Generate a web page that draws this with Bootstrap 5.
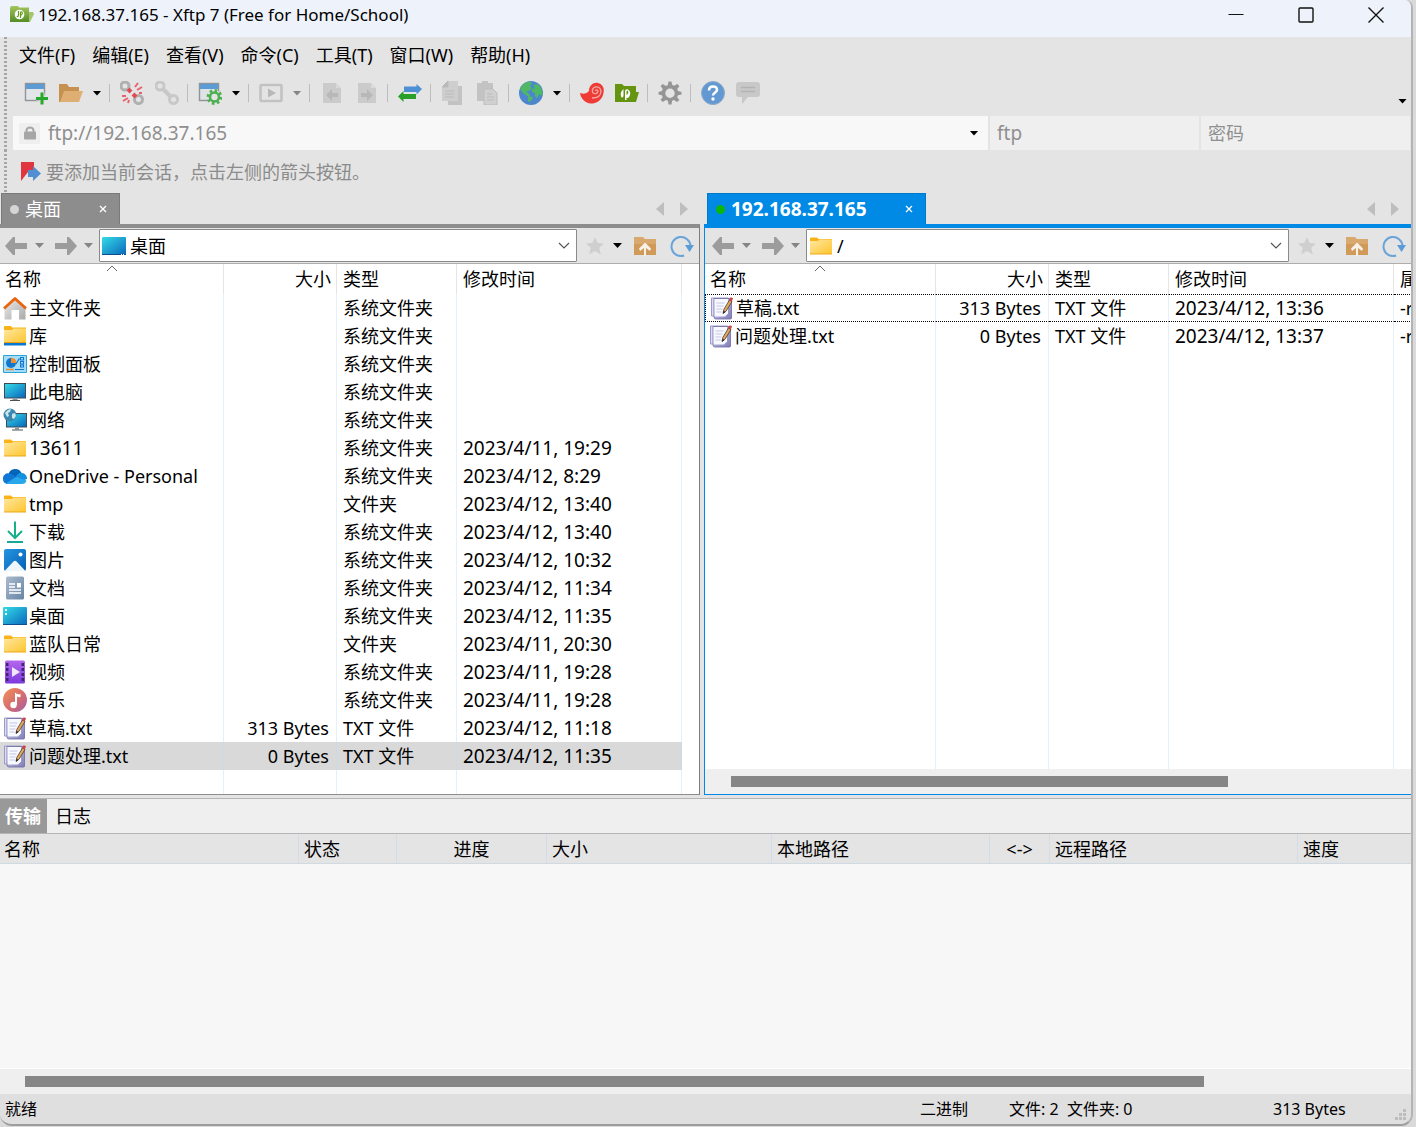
<!DOCTYPE html>
<html lang="zh-CN">
<head>
<meta charset="utf-8">
<meta name="viewport" content="width=device-width, initial-scale=1">
<title>192.168.37.165 - Xftp 7</title>
<link href="https://cdn.jsdelivr.net/npm/bootstrap@5.3.0/dist/css/bootstrap.min.css" rel="stylesheet">
<style>
body{font-family:"Noto Sans","Noto Sans CJK SC",sans-serif;font-size:18px;line-height:24px;color:#000;background:#dadada;min-height:100vh}
.win{min-height:calc(100vh - 1px);margin-right:3px;border-right:2px solid #b3b3b3;border-bottom:2px solid #9d9d9d;border-radius:0 8px 12px 12px;background:#e4e4e4;overflow:hidden}
svg{display:block;flex:none}
button,.flatlink{border:0;background:none;padding:0;color:inherit;text-decoration:none}
input{border:0;background:none;padding:0;min-width:0;outline:0;color:inherit}
.titlebar{height:37px;background:#eef3fb;padding:0 0 7px 10px}
.titletext{font-size:17px;line-height:24px}
.winbtn{width:70px;height:30px}
.grip{width:3px;margin-left:4px;background:repeating-linear-gradient(#a6a6a6 0 2px,transparent 2px 4px)}
.menurow{height:36px;padding-left:12px}
.menurow a{margin-right:17px}
.toolrow{height:40px;padding-left:11px}
.tbtn{width:35px;height:30px}
.cbtn{width:18px;height:30px}
.vsep{width:1px;height:18px;background:#bdbdbd;margin:0 4px 0 3px}
.caret{width:9px;height:5px;background:#000;clip-path:polygon(0 0,100% 0,50% 100%)}
.caret.dim{background:#858585}
.addr{height:34px;margin:3px 1px 0 6px;color:#8f8f8f;gap:2px;font-size:19px}
.urlbox{background:#f8f8f8;padding-left:6px}
.dropbtn{width:28px;height:30px}
.lockbox{width:21px;height:21px;background:#efefef}
.cred{background:#efefef;padding-left:7px;width:209px}
.cred::placeholder{color:#8f8f8f;opacity:1;font-size:18px}
.favrow{height:43px;padding-left:13px;color:#8b8b8b}
.panes{gap:4px}
.pane-l{flex:700 1 0}
.pane-r{flex:707 1 0}
.pane-l,.pane-r{min-width:0}
.tabrow{height:31px;padding-right:12px}
.ptab{height:31px;color:#fff;border:1px solid #7a7a7a;border-bottom:0;background:#8d8d8d;padding:0 12px 0 8px;margin-left:1px;width:119px}
.pane-r .ptab{background:#008ae5;border-color:#0079c9;width:219px;font-size:19px;font-weight:700;margin-left:3px}
.dot{width:9px;height:9px;border-radius:50%;background:#d5d5d5;margin-right:6px}
.pane-r .dot{background:#0db60d}
.pbody{border-top:4px solid #8d8d8d;border-right:1px solid #7d7d7d;border-bottom:1px solid #8d8d8d;min-height:571px}
.pane-r .pbody{border:1px solid #008ae5;border-top-width:4px;border-right:0}
.ptools{height:36px;border-bottom:1px solid #adadad;padding-left:4px}
.pane-r .ptools{padding-left:6px}
.hbtn{width:18px;height:30px;margin-left:3px}
.upbtn{margin-left:6px}
.refbtn{margin:0 5px 0 13px}
.combo{height:33px;border:1px solid #8a8a8a;background:#fff;padding:0 6px 0 2px;border-radius:1px;margin-left:1px}
.flist{background:#fff;overflow:hidden}
.ftable{table-layout:fixed;width:682px;border-collapse:separate;border-spacing:0}
.pane-r .ftable{width:789px}
.ftable th,.ftable td{padding:0 7px 0 6px;white-space:nowrap;overflow:hidden;height:28px;border-right:1px solid #e6f0fb;font-weight:400}
.ftable th{height:30px;border-right-color:#e5e5e5;text-align:left;position:relative}
.ftable th:first-child{padding-left:5px}
.ftable td:first-child{padding:0 0 0 3px}
.ftable td > div{gap:2px}
.ftable .r{text-align:right}
.ftable th.r{padding-right:5px}
.ftable .when{font-size:19px}
.ftable tr.filler td{height:24px}
.pane-r tr.filler td{height:auto}
.ftable tr.picked td{background:#d9d9d9;border-color:#ccd9e8}
.ftable tr.focused td{border-top:1px dotted #000;border-bottom:1px dotted #000}
.ftable tr.focused td:first-child{border-left:1px dotted #000}
.pane-r .ftable td:first-child{padding-left:4px}
.c1{width:224px}.c2{width:113px}.c3{width:120px}.c4{width:225px}.c5{width:100px}
.pane-r .c1{width:231px}
.sorted{position:absolute;left:50%;margin-left:-6px;top:1px}
.hscroll{height:25px;background:#efefef}
.thumb{height:11px;background:#868686}
.xtabs{height:36px;margin-top:3px;border-top:1px solid #b5b5b5;border-bottom:1px solid #b5b5b5;background:#efefef}
.xtabs button{padding:0 8px}
.xtabs .on{background:#999;color:#fff;font-weight:700;padding:0 6px 0 5px}
.xtable{table-layout:fixed;width:100%;border-collapse:separate;border-spacing:0}
.xtable th{height:30px;font-weight:400;padding:0 5px;border-right:1px solid #d3dde8;border-bottom:1px solid #d0dae3;overflow:hidden;white-space:nowrap}
.xtable th:first-child{padding-left:4px}
.xtable th:last-child{border-right:0}
.xbody{background:#f7f7f7;border-bottom:1px solid #fff;min-height:100px}
.status{height:30px;background:#dfdfdf;font-size:16px;padding-left:5px}
.s2{width:89px}.s3{width:264px}.s4{width:138px}
</style>
<script src="https://cdn.jsdelivr.net/npm/bootstrap@5.3.0/dist/js/bootstrap.bundle.min.js"></script>
</head>
<body>
<svg width="0" height="0" class="position-absolute" aria-hidden="true">
<defs>
<linearGradient id="gf" x1="0" y1="0" x2="1" y2="1"><stop offset="0" stop-color="#ffe8a2"/><stop offset="1" stop-color="#fec52d"/></linearGradient>
<linearGradient id="gb" x1="0" y1="0" x2="1" y2="1"><stop offset="0" stop-color="#35dbe6"/><stop offset="1" stop-color="#0867bd"/></linearGradient>
<linearGradient id="gh" x1="0" y1="0" x2="1" y2="1"><stop offset="0" stop-color="#ececec"/><stop offset="1" stop-color="#a9a9a9"/></linearGradient>
<linearGradient id="gm" x1="0" y1="0" x2="1" y2="1"><stop offset="0" stop-color="#f59053"/><stop offset=".6" stop-color="#d06b74"/><stop offset="1" stop-color="#a45cae"/></linearGradient>
<linearGradient id="gv" x1="0" y1="0" x2="0" y2="1"><stop offset="0" stop-color="#b466ee"/><stop offset="1" stop-color="#7e3ade"/></linearGradient>
<linearGradient id="gd" x1="0" y1="0" x2="1" y2="1"><stop offset="0" stop-color="#abbccd"/><stop offset="1" stop-color="#6584a5"/></linearGradient>
<linearGradient id="gp" x1="0" y1="0" x2="1" y2="1"><stop offset="0" stop-color="#2595e0"/><stop offset="1" stop-color="#0560b4"/></linearGradient>
<linearGradient id="gt" x1="0" y1="0" x2="1" y2="1"><stop offset="0" stop-color="#d9d8f2"/><stop offset="1" stop-color="#7f7cb6"/></linearGradient>
<linearGradient id="gx" x1="0" y1="0" x2="0" y2="1"><stop offset="0" stop-color="#a3c65c"/><stop offset="1" stop-color="#558c26"/></linearGradient>
</defs>
<symbol id="i-folder" viewBox="0 0 24 24"><path d="M1 4.500q0-1 1-1h6l1.500 1.500H23v5H1z" fill="#f9b318"/><path d="M1 7h8l1.500-1.500H23v14.500H1z" fill="url(#gf)"/><path d="M1 19.500h22v1H1z" fill="#eda916"/></symbol>
<symbol id="i-lib" viewBox="0 0 24 24"><path d="M1 3q0-1 1-1h6l1 1.500h14v7H1z" fill="#f9b318"/><path d="M1 6h8l1.500-1.500H23v14H1z" fill="url(#gf)"/><path d="M1 18h22v1H1z" fill="#e9a212"/><path d="M1 19h22v2.500H1z" fill="#0878d2"/></symbol>
<symbol id="i-home" viewBox="0 0 24 24"><path d="M1.500 11 12 2l10.500 9v12.500H16V14H8.500v9.500h-7z" fill="url(#gh)"/><path d="M1 12.500 12 2.500l11 10" fill="none" stroke="#e8640e" stroke-width="2.800" stroke-linejoin="round"/></symbol>
<symbol id="i-ctrl" viewBox="0 0 24 24"><path d="M0.500 3.500h23v17H.5z" fill="#a3ddf8" stroke="#2da3d8"/><circle cx="8" cy="11" r="5" fill="#1277cf"/><path d="M8 11V5.500A5.500 5.500 0 0 1 13.500 11z" fill="#f1902a"/><path d="M3 17.500h8" stroke="#ee8d22" stroke-width="1.500"/><path d="M12 17.500h9M13 12l3-5h2" stroke="#1277cf" fill="none" stroke-width="1.200"/><rect x="17.500" y="5.500" width="3" height="2.500" fill="none" stroke="#1277cf"/><rect x="17.500" y="9.500" width="3" height="2.500" fill="none" stroke="#1277cf"/><rect x="17.500" y="13" width="3" height="2" fill="none" stroke="#1277cf"/></symbol>
<symbol id="i-pc" viewBox="0 0 24 24"><path d="M1 3h22v15.500H1z" fill="#3f4a52"/><path d="M2 4h20v13.500H2z" fill="url(#gb)"/><path d="M9.500 18.500h5v2h-5z" fill="#8b949a"/><path d="M7 20h10v1H7z" fill="#4b5257"/></symbol>
<symbol id="i-net" viewBox="0 0 24 24"><path d="M3 5h21v14.500H3z" fill="#3f4a52"/><path d="M4 6h19v12.500H4z" fill="url(#gb)"/><path d="M12 19.500h4v2h-4z" fill="#8b949a"/><path d="M9 21.500h11v1H9z" fill="#4b5257"/><circle cx="7" cy="7" r="6.500" fill="#3c87ae"/><path d="M2 5q3-4 6-4l-1 3-2 1 1 3-2 1zM9 6l3-1 1 3-2 3-2-1z" fill="#c7e6ee"/></symbol>
<symbol id="i-od" viewBox="0 0 24 24"><path d="M5.500 10a7 7 0 0 1 13-1l-5 5-7-2z" fill="#0364b8"/><path d="M0 15a5 5 0 0 1 6-5.500q3 0 5 2l6 4-13 4.500A5 5 0 0 1 0 15z" fill="#0f78d4"/><path d="M13 12.500q2.500-4.500 6-3.500a5.500 5.500 0 0 1 5 6l-5 2z" fill="#1490df"/><path d="M3 19.500 13 13l10.500 3.500q-1 3.500-4.500 3.500H5q-1 0-2-.5z" fill="#28a8ea"/></symbol>
<symbol id="i-down" viewBox="0 0 24 24"><path d="M12 1.500v15.500M5 11l7 7 7-7" fill="none" stroke="#17b08b" stroke-width="2"/><path d="M4 22h16" stroke="#17a89a" stroke-width="2"/></symbol>
<symbol id="i-pic" viewBox="0 0 24 24"><rect x="1" y="1" width="22" height="22" rx="2" fill="url(#gp)"/><path d="M2 22.500 10.500 13.500q1.500-1.500 3 0L22 22.500q-.5.500-1 .5H3q-.5 0-1-.5z" fill="#eef6fd"/><circle cx="17.500" cy="6.500" r="2" fill="#fff"/></symbol>
<symbol id="i-doc" viewBox="0 0 24 24"><rect x="3" y="0.500" width="18" height="23" rx="1.500" fill="url(#gd)"/><path d="M6 8h6M6 11h6M6 14h12M6 17h12" stroke="#fff" stroke-width="1.300"/><path d="M14 7h4v4.500h-4z" fill="#fff"/></symbol>
<symbol id="i-desk" viewBox="0 0 24 24"><rect y="3" width="24" height="18" rx="1" fill="url(#gb)"/><path d="M2 5h2v2H2zM2 9h2v2H2z" fill="#e4fbff"/><path d="M0 20h24v1H0z" fill="#0b4f91"/></symbol>
<symbol id="i-deskplain" viewBox="0 0 24 24"><rect y="3" width="24" height="18" rx="1" fill="url(#gb)"/><path d="M0 20h24v1H0z" fill="#0b4f91"/><path d="M19 20h1v1h-1zM21 20h1v1h-1z" fill="#fff"/></symbol>
<symbol id="i-vid" viewBox="0 0 24 24"><rect x="2" y="0.500" width="20" height="23" rx="1.500" fill="url(#gv)"/><path d="M3 3h2.500v3H3zM3 8h2.500v3H3zM3 13h2.500v3H3zM3 18h2.500v3H3zM18.500 3H21v3h-2.500zM18.500 8H21v3h-2.500zM18.500 13H21v3h-2.500zM18.500 18H21v3h-2.500z" fill="#3f2471"/><path d="M9 7l8 5-8 5z" fill="#efe7fb"/></symbol>
<symbol id="i-mus" viewBox="0 0 24 24"><circle cx="12" cy="12" r="12" fill="url(#gm)"/><path d="M12 4.500q2 2.500 5.500 1.500v3q-2 .5-3.500-.5V17h-2z" fill="#fff"/><circle cx="10.500" cy="17" r="3.200" fill="#fff"/></symbol>
<symbol id="i-txt" viewBox="0 0 24 24"><path d="M1.500 2h17v18h-17z" fill="#dedcf3" stroke="#9c9aca"/><path d="M4 2.500h17.500V22q0 1-1 1H6q-2 0-2-2z" fill="url(#gt)" stroke="#6d6aa4" stroke-width=".8"/><path d="M4.500 3H18v14.500L15 20.500H4.500z" fill="#f8f8ff"/><path d="M6.500 7h8M6.500 10h7M6.500 13h6M6.500 16h5" stroke="#c3c8e4"/><path d="m13 17.500.8-4 5.700-9.500 2.500 1.500-5.800 9.500z" fill="#e0a95d" stroke="#4d3a31" stroke-width=".8"/><path d="m13 17.800.6-3 1.900 1.200z" fill="#222"/><path d="m19 4 1.300-2.500q2-.5 2.700 1L21.700 5.500z" fill="#c9444b"/></symbol>
<symbol id="i-back" viewBox="0 0 24 20"><path d="M1 10 9 1h2v6h12v6H11v6H9z" fill="#9c9c9c"/></symbol>
<symbol id="i-fwd" viewBox="0 0 24 20"><path d="M24 10 16 1h-2v6H2v6h12v6h2z" fill="#9c9c9c"/></symbol>
<symbol id="i-star" viewBox="0 0 20 20"><path d="m10 1 2.700 6 6.300.6-4.800 4.200 1.600 6.700L10 15l-5.800 3.500 1.600-6.700L1 7.600 7.300 7z" fill="#cfcfcf"/></symbol>
<symbol id="i-up" viewBox="0 0 24 24"><path d="M1 3h9l2 2h11v16H1z" fill="#d9a86c"/><path d="M1 10h22v11H1z" fill="#d09a58"/><path d="M11 22v-8l-4 3-1-2.500L12 8.500l6 6-1 2.500-4-3v8z" fill="#f7f1ea"/></symbol>
<symbol id="i-ref" viewBox="0 0 24 24"><path d="M14 21.500A9.500 9.500 0 1 1 20.500 12" fill="none" stroke="#68a3da" stroke-width="2"/><path d="M15 11h9l-4.500 7z" fill="#5b9bd8"/></symbol>
<symbol id="i-chev" viewBox="0 0 12 8"><path d="m1 1 5 5 5-5" fill="none" stroke="#555" stroke-width="1.200"/></symbol>
<symbol id="i-sort" viewBox="0 0 12 7"><path d="m1 6 5-5 5 5" fill="none" stroke="#666"/></symbol>
<symbol id="i-x" viewBox="0 0 8 8"><path d="m1 1 6 6M7 1 1 7" stroke="#fff" stroke-width="1.300"/></symbol>
<symbol id="i-l" viewBox="0 0 8 14"><path d="M8 0v14L0 7z" fill="#bebebe"/></symbol>
<symbol id="i-r" viewBox="0 0 8 14"><path d="M0 0v14l8-7z" fill="#bebebe"/></symbol>
<symbol id="i-gear" viewBox="0 0 24 24"><path fill-rule="evenodd" d="M10.500.500h3l.6 3.300 2 .9L19.400 3l2 2.300-2.200 2.800.8 2 3.500.8v2.600l-3.500.8-.8 2 2.200 2.800-2.300 2-3.100-2-1.900.7-.6 3.700h-3l-.6-3.700-2-.8-3.100 2-2.300-2.200 2.200-2.600-.8-2-3.400-.8V10.900l3.400-.9.8-2.100L2.600 5.100l2.200-2.200 3.100 2 2-.8zM12 7.500a4.700 4.700 0 1 0 0 9.400 4.700 4.700 0 0 0 0-9.400z"/></symbol>
<symbol id="i-xf" viewBox="0 0 24 24"><path d="M8.500 8v6.500q0 2.500-2 2Q4 12 8.500 8zM10 19V10.500q0-3 3-2Q17 11 14 16q-1.500 1.500-2.500.5V19z" fill="#fff"/><path d="M11.500 14v-3.500q.5-1.500 1.500-.5 1 2.500-1.500 4z" fill="#649410"/></symbol>
</svg>

<main class="win d-flex flex-column">
<header class="titlebar d-flex align-items-center">
  <svg width="24" height="24" viewBox="0 0 24 24" class="me-1"><path d="M0 5q0-2 2-2h6l1 1.500h10V19H0z" fill="url(#gx)"/><path d="M19 9h4l1 2-4 8h-1z" fill="#a9c46f"/><circle cx="9.500" cy="11.500" r="4.800" fill="#fff"/><path d="M8.500 8v4q0 2-1.800 1.500M10.500 15v-5q0-1.500 1.500-1 1.200 2-1.500 3.500" fill="none" stroke="#649d1a" stroke-width="1.200"/></svg>
  <span class="titletext flex-grow-1">192.168.37.165 - Xftp 7 (Free for Home/School)</span>
  <button class="winbtn" aria-label="最小化"><svg class="mx-auto" width="16" height="16" viewBox="0 0 16 16"><path d="M0.500 7.500h15" stroke="#111"/></svg></button>
  <button class="winbtn" aria-label="最大化"><svg class="mx-auto" width="16" height="16" viewBox="0 0 16 16"><rect x="1" y="1" width="14" height="14" rx="1" fill="none" stroke="#111" stroke-width="1.400"/></svg></button>
  <button class="winbtn" aria-label="关闭"><svg class="mx-auto" width="16" height="16" viewBox="0 0 16 16"><path d="m.5.500 15 15m0-15-15 15" stroke="#111" stroke-width="1.400"/></svg></button>
</header>

<div class="d-flex">
  <span class="grip"></span>
  <nav class="menurow d-flex align-items-center flex-grow-1">
    <a class="flatlink" href="#">文件(F)</a><a class="flatlink" href="#">编辑(E)</a><a class="flatlink" href="#">查看(V)</a><a class="flatlink" href="#">命令(C)</a><a class="flatlink" href="#">工具(T)</a><a class="flatlink" href="#">窗口(W)</a><a class="flatlink" href="#">帮助(H)</a>
  </nav>
</div>

<div class="d-flex">
  <span class="grip"></span>
  <div class="flex-grow-1">
    <div class="toolrow d-flex align-items-center">
      <button class="tbtn" aria-label="新建"><svg class="mx-auto" width="24" height="24" viewBox="0 0 24 24"><rect x="1.500" y="2.500" width="19" height="17" fill="#e2e6e8" stroke="#8e9498" stroke-width="1.400"/><path d="M2 3h18v5H2z" fill="#5c9bd4"/><path d="M12 17h12M18 11.500v12" stroke="#e4e4e4" stroke-width="5"/><path d="M12 17.500h12M18 11.500v12" stroke="#25a82b" stroke-width="3"/></svg></button>
      <button class="tbtn" aria-label="打开"><svg class="mx-auto" width="24" height="24" viewBox="0 0 24 24"><path d="M0 3h8l2 3h10v5H6L3 21H0z" fill="#c6914e"/><path d="M5 10h19l-4 11H1z" fill="#dfae72"/></svg></button>
      <button class="cbtn" aria-label="打开菜单"><span class="caret d-block mx-auto"></span></button>
      <span class="vsep"></span>
      <button class="tbtn" aria-label="断开"><svg class="mx-auto" width="24" height="24" viewBox="0 0 24 24" fill="none"><circle cx="5" cy="5" r="4" stroke="#b0b0b0" stroke-width="3"/><circle cx="18.500" cy="18.500" r="4" stroke="#b0b0b0" stroke-width="3"/><path d="m8 8 3 3M13 13l3 3" stroke="#e14b54" stroke-width="4"/><path d="m15 6 3-4M17 9l5-3M19 12h3M2 15h4M3 20l5-3M8 22l1-3" stroke="#e9616a" stroke-width="2"/></svg></button>
      <button class="tbtn" aria-label="重新连接"><svg class="mx-auto" width="24" height="24" viewBox="0 0 24 24" fill="none" stroke="#c8c8c8"><circle cx="5" cy="5" r="4" stroke-width="3"/><circle cx="18.500" cy="18.500" r="4" stroke-width="3"/><path d="m8 8 8 8" stroke-width="4"/></svg></button>
      <span class="vsep"></span>
      <button class="tbtn" aria-label="会话属性"><svg class="mx-auto" width="24" height="24" viewBox="0 0 24 24"><rect x="1.500" y="2.500" width="19" height="17" fill="#dfe3e5" stroke="#8e9498" stroke-width="1.400"/><path d="M2 3h18v5H2z" fill="#5c9bd4"/><circle cx="16.500" cy="16" r="7" fill="#e4e4e4"/><circle cx="16.500" cy="16" r="4.500" fill="none" stroke="#4caf50" stroke-width="2.600"/><circle cx="16.500" cy="16" r="6.600" fill="none" stroke="#4caf50" stroke-width="2.600" stroke-dasharray="2.600 2.580"/></svg></button>
      <button class="cbtn" aria-label="属性菜单"><span class="caret d-block mx-auto"></span></button>
      <span class="vsep"></span>
      <button class="tbtn" aria-label="运行"><svg class="mx-auto" width="24" height="24" viewBox="0 0 24 24"><rect x="1.500" y="4" width="21" height="16" rx="1" fill="none" stroke="#c2c2c2" stroke-width="2.600"/><path d="m9 7.500 8 4.500-8 4.500z" fill="#b8b8b8"/></svg></button>
      <button class="cbtn" aria-label="运行菜单"><span class="caret dim d-block mx-auto"></span></button>
      <span class="vsep"></span>
      <button class="tbtn" aria-label="传送到左"><svg class="mx-auto" width="24" height="24" viewBox="0 0 24 24"><path d="M3 2h13l5 5v15H3z" fill="#cbcbcb"/><path d="M16 2v5h5z" fill="#dadada"/><path d="m6 14 6-6v4h6v4h-6v4z" fill="#b8b8b8"/></svg></button>
      <button class="tbtn" aria-label="传送到右"><svg class="mx-auto" width="24" height="24" viewBox="0 0 24 24"><path d="M3 2h13l5 5v15H3z" fill="#cbcbcb"/><path d="M16 2v5h5z" fill="#dadada"/><path d="m18 14-6-6v4H6v4h6v4z" fill="#b8b8b8"/></svg></button>
      <span class="vsep"></span>
      <button class="tbtn" aria-label="同步"><svg class="mx-auto" width="24" height="24" viewBox="0 0 24 24"><path d="M24 8 18.500 3v2.500H6V11h12.500v2.500z" fill="#4f8fd3"/><path d="M0 15.500 5.500 10v3H18v5H5.500v3z" fill="#2aa02a"/></svg></button>
      <span class="vsep"></span>
      <button class="tbtn" aria-label="复制"><svg class="mx-auto" width="24" height="24" viewBox="0 0 24 24"><path d="M7 5h14v19H7z" fill="#c3c3c3"/><path d="M7 0h10v20H1V6z" fill="#cecece"/><path d="M7 0v6H1zM4 10h9M4 13h9M4 16h9" fill="#b9b9b9" stroke="#bbb"/></svg></button>
      <button class="tbtn" aria-label="粘贴"><svg class="mx-auto" width="24" height="24" viewBox="0 0 24 24"><path d="M1 2h5V0h6v2h5v18H1z" fill="#c3c3c3"/><path d="M8 8h9l4 4v12H8z" fill="#d0d0d0" stroke="#bdbdbd"/><path d="M11 13h5M11 16h7M11 19h7" stroke="#bbb"/></svg></button>
      <span class="vsep"></span>
      <button class="tbtn" aria-label="编码"><svg class="mx-auto" width="24" height="24" viewBox="0 0 24 24"><circle cx="12" cy="12" r="12" fill="#4c86cc"/><path d="M3 4.500Q6 1 11 0.500L13 2l-2 3 2 2-3 3H7l4 4-1 2-6-4-3-4zM9 15l5 1-2 4-3 1zM14 4l5-1q5 5 4.500 12L20 13l-2 4-2-2v-3l-3-1V8l3-1z" fill="#4eb865"/></svg></button>
      <button class="cbtn" aria-label="编码菜单"><span class="caret d-block mx-auto"></span></button>
      <span class="vsep"></span>
      <button class="tbtn" aria-label="Xshell"><svg class="mx-auto" width="24" height="24" viewBox="0 0 24 24"><path d="M0 12q6 2 9-2C9 4 14 1 18 2q7 2 5.500 10C22 20 16 22.500 11 22.500 5 22 1 18 0 12z" fill="#ee3b36"/><path d="M12 17q9 0 9-7-1-5-6-4-4 2-2 6 4 2 5-2-1-2-3-.5" fill="none" stroke="#f4a9a5" stroke-width="1.300"/></svg></button>
      <button class="tbtn" aria-label="新建 Xftp"><svg class="mx-auto" width="24" height="24" viewBox="0 0 24 24"><path d="M0 3h7l2 2h12v6h3l-3 10H0z" fill="#649410"/><use href="#i-xf"/></svg></button>
      <span class="vsep"></span>
      <button class="tbtn" aria-label="选项"><svg class="mx-auto" width="24" height="24" fill="#959595"><use href="#i-gear"/></svg></button>
      <span class="vsep"></span>
      <button class="tbtn" aria-label="帮助"><svg class="mx-auto" width="24" height="24" viewBox="0 0 24 24"><circle cx="12" cy="12" r="11.500" fill="#6299d3" stroke="#90a9c3"/><path d="M8 9.500q0-4 4-4t4 3.500c0 2.500-4 2.500-4 5.500" fill="none" stroke="#fff" stroke-width="2.500"/><circle cx="12" cy="18" r="1.700" fill="#fff"/></svg></button>
      <button class="tbtn" aria-label="反馈"><svg class="mx-auto" width="24" height="24" viewBox="0 0 24 24"><path d="M3 1h18q3 0 3 3v9q0 3-3 3h-9l-6 7v-7H3q-3 0-3-3V4q0-3 3-3z" fill="#c8c8c8"/><path d="M5 6.500h14M5 10.500h14" stroke="#b3b3b3" stroke-width="1.600"/></svg></button>
      <button class="cbtn ms-auto me-1 pt-3" aria-label="更多"><span class="caret d-block ms-auto"></span></button>
    </div>
    <div class="addr d-flex">
      <div class="urlbox d-flex align-items-center flex-grow-1">
        <span class="lockbox d-flex align-items-center justify-content-center"><svg width="14" height="14" viewBox="0 0 14 14"><path d="M3.500 6V4.500a3.500 3 0 0 1 7 0V6" fill="none" stroke="#a6a6a6" stroke-width="2"/><rect x="1" y="5.500" width="12" height="8" rx="1" fill="#a6a6a6"/></svg></span>
        <input class="flex-grow-1 ms-2" aria-label="地址" value="ftp://192.168.37.165">
        <button class="dropbtn" aria-label="地址列表"><span class="caret d-block mx-auto"></span></button>
      </div>
      <input class="cred" aria-label="用户名" placeholder="用户名" value="ftp">
      <input class="cred" type="password" aria-label="密码" placeholder="密码">
    </div>
  </div>
</div>

<div class="d-flex">
  <span class="grip"></span>
  <div class="favrow d-flex align-items-center">
    <button class="me-1" aria-label="添加当前会话"><svg width="22" height="22" viewBox="0 0 22 22"><path d="M1 1h13v14l-6-4-7 9z" fill="#df3640"/><path d="M8 9h5V5l8 7.500-8 7.500v-4H8z" fill="#508fd2"/></svg></button>
    <span>要添加当前会话，点击左侧的箭头按钮。</span>
  </div>
</div>

<div class="panes d-flex">
  <section class="pane-l d-flex flex-column">
    <div class="tabrow d-flex align-items-center">
      <div class="ptab d-flex align-items-center"><span class="dot"></span><span class="flex-grow-1">桌面</span><button aria-label="关闭标签"><svg width="8" height="8"><use href="#i-x"/></svg></button></div>
      <button class="ms-auto" aria-label="上一个"><svg width="8" height="14"><use href="#i-l"/></svg></button>
      <button class="ms-3" aria-label="下一个"><svg width="8" height="14"><use href="#i-r"/></svg></button>
    </div>
    <div class="pbody flex-grow-1 d-flex flex-column">
      <div class="ptools d-flex align-items-center">
        <button aria-label="后退"><svg width="24" height="20"><use href="#i-back"/></svg></button>
        <button class="hbtn" aria-label="后退历史"><span class="caret dim d-block ms-1"></span></button>
        <button class="ms-1" aria-label="前进"><svg width="24" height="20"><use href="#i-fwd"/></svg></button>
        <button class="hbtn" aria-label="前进历史"><span class="caret dim d-block ms-1"></span></button>
        <div class="combo d-flex align-items-center flex-grow-1">
          <svg width="24" height="24"><use href="#i-deskplain"/></svg><input class="flex-grow-1 ms-1" aria-label="本地目录" value="桌面"><button aria-label="展开"><svg width="12" height="8"><use href="#i-chev"/></svg></button>
        </div>
        <button class="ms-2" aria-label="收藏"><svg width="20" height="20"><use href="#i-star"/></svg></button>
        <button class="cbtn ms-1" aria-label="收藏菜单"><span class="caret d-block ms-1"></span></button>
        <button class="upbtn" aria-label="上级"><svg width="24" height="24"><use href="#i-up"/></svg></button>
        <button class="refbtn" aria-label="刷新"><svg width="24" height="24"><use href="#i-ref"/></svg></button>
      </div>
      <div class="flist flex-grow-1 d-flex">
        <table class="ftable">
          <colgroup><col class="c1"><col class="c2"><col class="c3"><col class="c4"></colgroup>
          <thead><tr><th>名称<svg class="sorted" width="12" height="7"><use href="#i-sort"/></svg></th><th class="r">大小</th><th>类型</th><th>修改时间</th></tr></thead>
          <tbody>
          <tr><td><div class="d-flex align-items-center"><svg width="24" height="24"><use href="#i-home"/></svg><span>主文件夹</span></div></td><td></td><td>系统文件夹</td><td></td></tr>
          <tr><td><div class="d-flex align-items-center"><svg width="24" height="24"><use href="#i-lib"/></svg><span>库</span></div></td><td></td><td>系统文件夹</td><td></td></tr>
          <tr><td><div class="d-flex align-items-center"><svg width="24" height="24"><use href="#i-ctrl"/></svg><span>控制面板</span></div></td><td></td><td>系统文件夹</td><td></td></tr>
          <tr><td><div class="d-flex align-items-center"><svg width="24" height="24"><use href="#i-pc"/></svg><span>此电脑</span></div></td><td></td><td>系统文件夹</td><td></td></tr>
          <tr><td><div class="d-flex align-items-center"><svg width="24" height="24"><use href="#i-net"/></svg><span>网络</span></div></td><td></td><td>系统文件夹</td><td></td></tr>
          <tr><td><div class="d-flex align-items-center"><svg width="24" height="24"><use href="#i-folder"/></svg><span class="when">13611</span></div></td><td></td><td>系统文件夹</td><td class="when">2023/4/11, 19:29</td></tr>
          <tr><td><div class="d-flex align-items-center"><svg width="24" height="24"><use href="#i-od"/></svg><span>OneDrive - Personal</span></div></td><td></td><td>系统文件夹</td><td class="when">2023/4/12, 8:29</td></tr>
          <tr><td><div class="d-flex align-items-center"><svg width="24" height="24"><use href="#i-folder"/></svg><span>tmp</span></div></td><td></td><td>文件夹</td><td class="when">2023/4/12, 13:40</td></tr>
          <tr><td><div class="d-flex align-items-center"><svg width="24" height="24"><use href="#i-down"/></svg><span>下载</span></div></td><td></td><td>系统文件夹</td><td class="when">2023/4/12, 13:40</td></tr>
          <tr><td><div class="d-flex align-items-center"><svg width="24" height="24"><use href="#i-pic"/></svg><span>图片</span></div></td><td></td><td>系统文件夹</td><td class="when">2023/4/12, 10:32</td></tr>
          <tr><td><div class="d-flex align-items-center"><svg width="24" height="24"><use href="#i-doc"/></svg><span>文档</span></div></td><td></td><td>系统文件夹</td><td class="when">2023/4/12, 11:34</td></tr>
          <tr><td><div class="d-flex align-items-center"><svg width="24" height="24"><use href="#i-desk"/></svg><span>桌面</span></div></td><td></td><td>系统文件夹</td><td class="when">2023/4/12, 11:35</td></tr>
          <tr><td><div class="d-flex align-items-center"><svg width="24" height="24"><use href="#i-folder"/></svg><span>蓝队日常</span></div></td><td></td><td>文件夹</td><td class="when">2023/4/11, 20:30</td></tr>
          <tr><td><div class="d-flex align-items-center"><svg width="24" height="24"><use href="#i-vid"/></svg><span>视频</span></div></td><td></td><td>系统文件夹</td><td class="when">2023/4/11, 19:28</td></tr>
          <tr><td><div class="d-flex align-items-center"><svg width="24" height="24"><use href="#i-mus"/></svg><span>音乐</span></div></td><td></td><td>系统文件夹</td><td class="when">2023/4/11, 19:28</td></tr>
          <tr><td><div class="d-flex align-items-center"><svg width="24" height="24"><use href="#i-txt"/></svg><span>草稿.txt</span></div></td><td class="r">313 Bytes</td><td>TXT 文件</td><td class="when">2023/4/12, 11:18</td></tr>
          <tr class="picked"><td><div class="d-flex align-items-center"><svg width="24" height="24"><use href="#i-txt"/></svg><span>问题处理.txt</span></div></td><td class="r">0 Bytes</td><td>TXT 文件</td><td class="when">2023/4/12, 11:35</td></tr>
          <tr class="filler"><td></td><td></td><td></td><td></td></tr>
          </tbody>
        </table>
      </div>
    </div>
  </section>

  <section class="pane-r d-flex flex-column">
    <div class="tabrow d-flex align-items-center">
      <div class="ptab d-flex align-items-center"><span class="dot"></span><span class="flex-grow-1">192.168.37.165</span><button aria-label="关闭标签"><svg width="8" height="8"><use href="#i-x"/></svg></button></div>
      <button class="ms-auto" aria-label="上一个"><svg width="8" height="14"><use href="#i-l"/></svg></button>
      <button class="ms-3" aria-label="下一个"><svg width="8" height="14"><use href="#i-r"/></svg></button>
    </div>
    <div class="pbody flex-grow-1 d-flex flex-column">
      <div class="ptools d-flex align-items-center">
        <button aria-label="后退"><svg width="24" height="20"><use href="#i-back"/></svg></button>
        <button class="hbtn" aria-label="后退历史"><span class="caret dim d-block ms-1"></span></button>
        <button class="ms-1" aria-label="前进"><svg width="24" height="20"><use href="#i-fwd"/></svg></button>
        <button class="hbtn" aria-label="前进历史"><span class="caret dim d-block ms-1"></span></button>
        <div class="combo d-flex align-items-center flex-grow-1">
          <svg width="24" height="24"><use href="#i-folder"/></svg><input class="flex-grow-1 ms-1" aria-label="远程目录" value="/"><button aria-label="展开"><svg width="12" height="8"><use href="#i-chev"/></svg></button>
        </div>
        <button class="ms-2" aria-label="收藏"><svg width="20" height="20"><use href="#i-star"/></svg></button>
        <button class="cbtn ms-1" aria-label="收藏菜单"><span class="caret d-block ms-1"></span></button>
        <button class="upbtn" aria-label="上级"><svg width="24" height="24"><use href="#i-up"/></svg></button>
        <button class="refbtn" aria-label="刷新"><svg width="24" height="24"><use href="#i-ref"/></svg></button>
      </div>
      <div class="flist flex-grow-1 d-flex">
        <table class="ftable flex-shrink-0">
          <colgroup><col class="c1"><col class="c2"><col class="c3"><col class="c4"><col class="c5"></colgroup>
          <thead><tr><th>名称<svg class="sorted" width="12" height="7"><use href="#i-sort"/></svg></th><th class="r">大小</th><th>类型</th><th>修改时间</th><th>属性</th></tr></thead>
          <tbody>
          <tr class="focused"><td><div class="d-flex align-items-center"><svg width="24" height="24"><use href="#i-txt"/></svg><span>草稿.txt</span></div></td><td class="r">313 Bytes</td><td>TXT 文件</td><td class="when">2023/4/12, 13:36</td><td>-rw-r--r--</td></tr>
          <tr><td><div class="d-flex align-items-center"><svg width="24" height="24"><use href="#i-txt"/></svg><span>问题处理.txt</span></div></td><td class="r">0 Bytes</td><td>TXT 文件</td><td class="when">2023/4/12, 13:37</td><td>-rw-r--r--</td></tr>
          <tr class="filler"><td></td><td></td><td></td><td></td><td></td></tr>
          </tbody>
        </table>
      </div>
      <div class="hscroll d-flex align-items-center"><div class="thumb" style="margin-left:26px;width:70.4%"></div></div>
    </div>
  </section>
</div>

<section class="d-flex flex-column flex-grow-1">
  <div class="xtabs d-flex"><button class="on">传输</button><button>日志</button></div>
  <table class="xtable">
    <colgroup><col style="width:21.190%"><col style="width:6.950%"><col style="width:10.630%"><col style="width:15.950%"><col style="width:15.450%"><col style="width:4.250%"><col style="width:17.580%"><col></colgroup>
    <thead><tr><th>名称</th><th>状态</th><th class="text-center">进度</th><th>大小</th><th>本地路径</th><th class="text-center">&lt;-&gt;</th><th>远程路径</th><th>速度</th></tr></thead>
  </table>
  <div class="xbody flex-grow-1"></div>
  <div class="hscroll d-flex align-items-center"><div class="thumb" style="margin-left:25px;width:83.560%"></div></div>
</section>

<footer class="status d-flex align-items-center">
  <span class="flex-grow-1">就绪</span><span class="s2">二进制</span><span class="s3">文件: 2&nbsp; 文件夹: 0</span>
  <span class="s4 d-flex justify-content-between align-items-end"><span>313 Bytes</span><svg width="16" height="16" viewBox="0 0 16 16" fill="#bdbdbd"><path d="M8 4h3v3H8zM8 8h3v3H8zM4 8h3v3H4zM8 12h3v3H8zM4 12h3v3H4zM0 12h3v3H0z"/></svg></span>
</footer>
</main>
</body>
</html>
